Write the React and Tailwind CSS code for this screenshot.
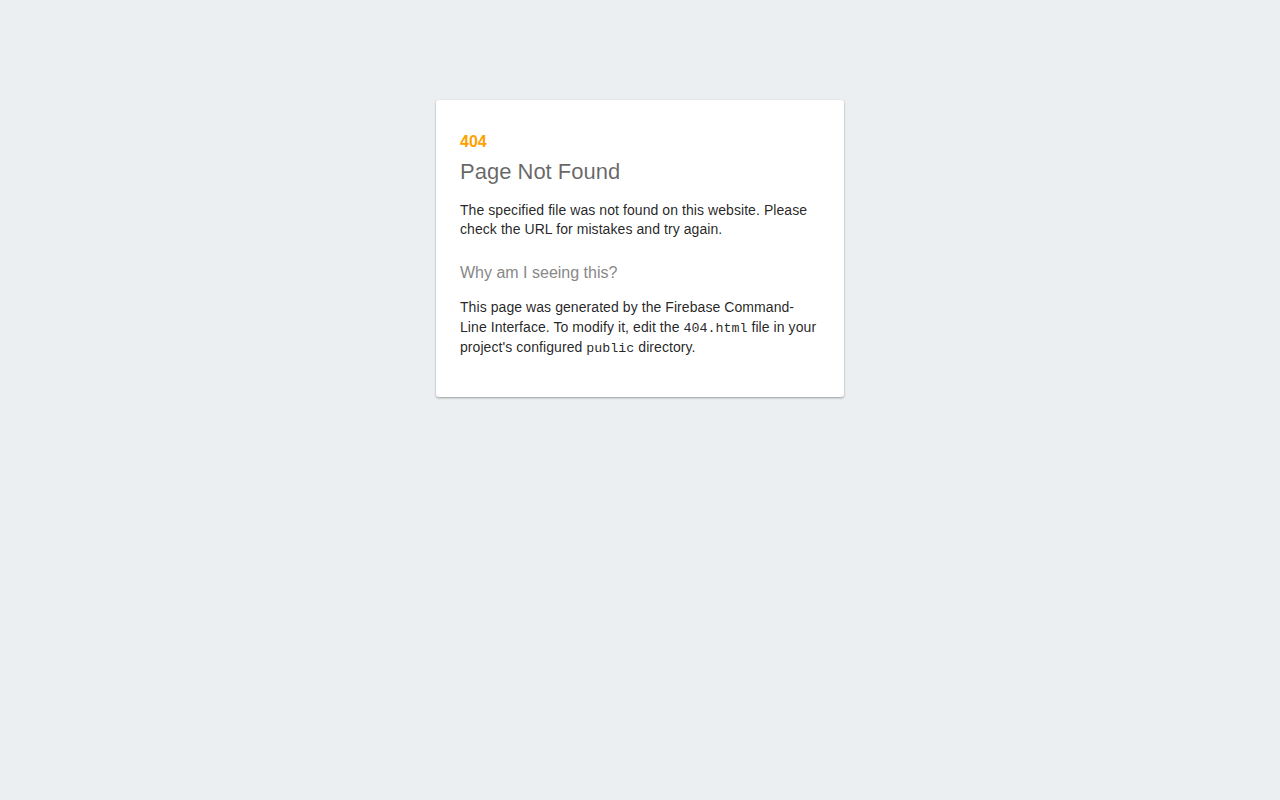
import React from "react";

const mono = { fontFamily: '"Liberation Mono", "Courier New", monospace' };

export default function App() {
  return (
    <div
      className="min-h-[800px] bg-[#ECEFF1] text-black/[0.87] pt-[100px]"
      style={{ fontFamily: '"Liberation Sans", Arial, Helvetica, sans-serif' }}
    >
      <div className="mx-auto w-[408px] bg-white rounded-[3px] px-6 pt-[33px] pb-[14px] shadow-[0_1px_3px_rgba(0,0,0,0.12),0_1px_2px_rgba(0,0,0,0.24)]">
        <h2 className="text-[#ffa100] font-bold text-base leading-[18px] mb-2">404</h2>
        <h1 className="text-[22px] leading-[25px] font-light text-black/60 mb-[17px]">Page Not Found</h1>
        <p className="text-sm leading-[19px] tracking-[0.07px] mb-[25px]">
          The specified file was not found on this website. Please check the URL for mistakes and try again.
        </p>
        <h3 className="text-[#888] font-normal text-base leading-[18px] mb-4">Why am I seeing this?</h3>
        <p className="text-sm leading-[1.4] tracking-[0.07px] mb-6">
          This page was generated by the Firebase Command-Line Interface. To modify it, edit the{" "}
          <code className="text-[13.33px] tracking-normal" style={mono}>
            404.html
          </code>{" "}
          file in your project's configured{" "}
          <code className="text-[13.33px] tracking-normal" style={mono}>
            public
          </code>{" "}
          directory.
        </p>
      </div>
    </div>
  );
}
